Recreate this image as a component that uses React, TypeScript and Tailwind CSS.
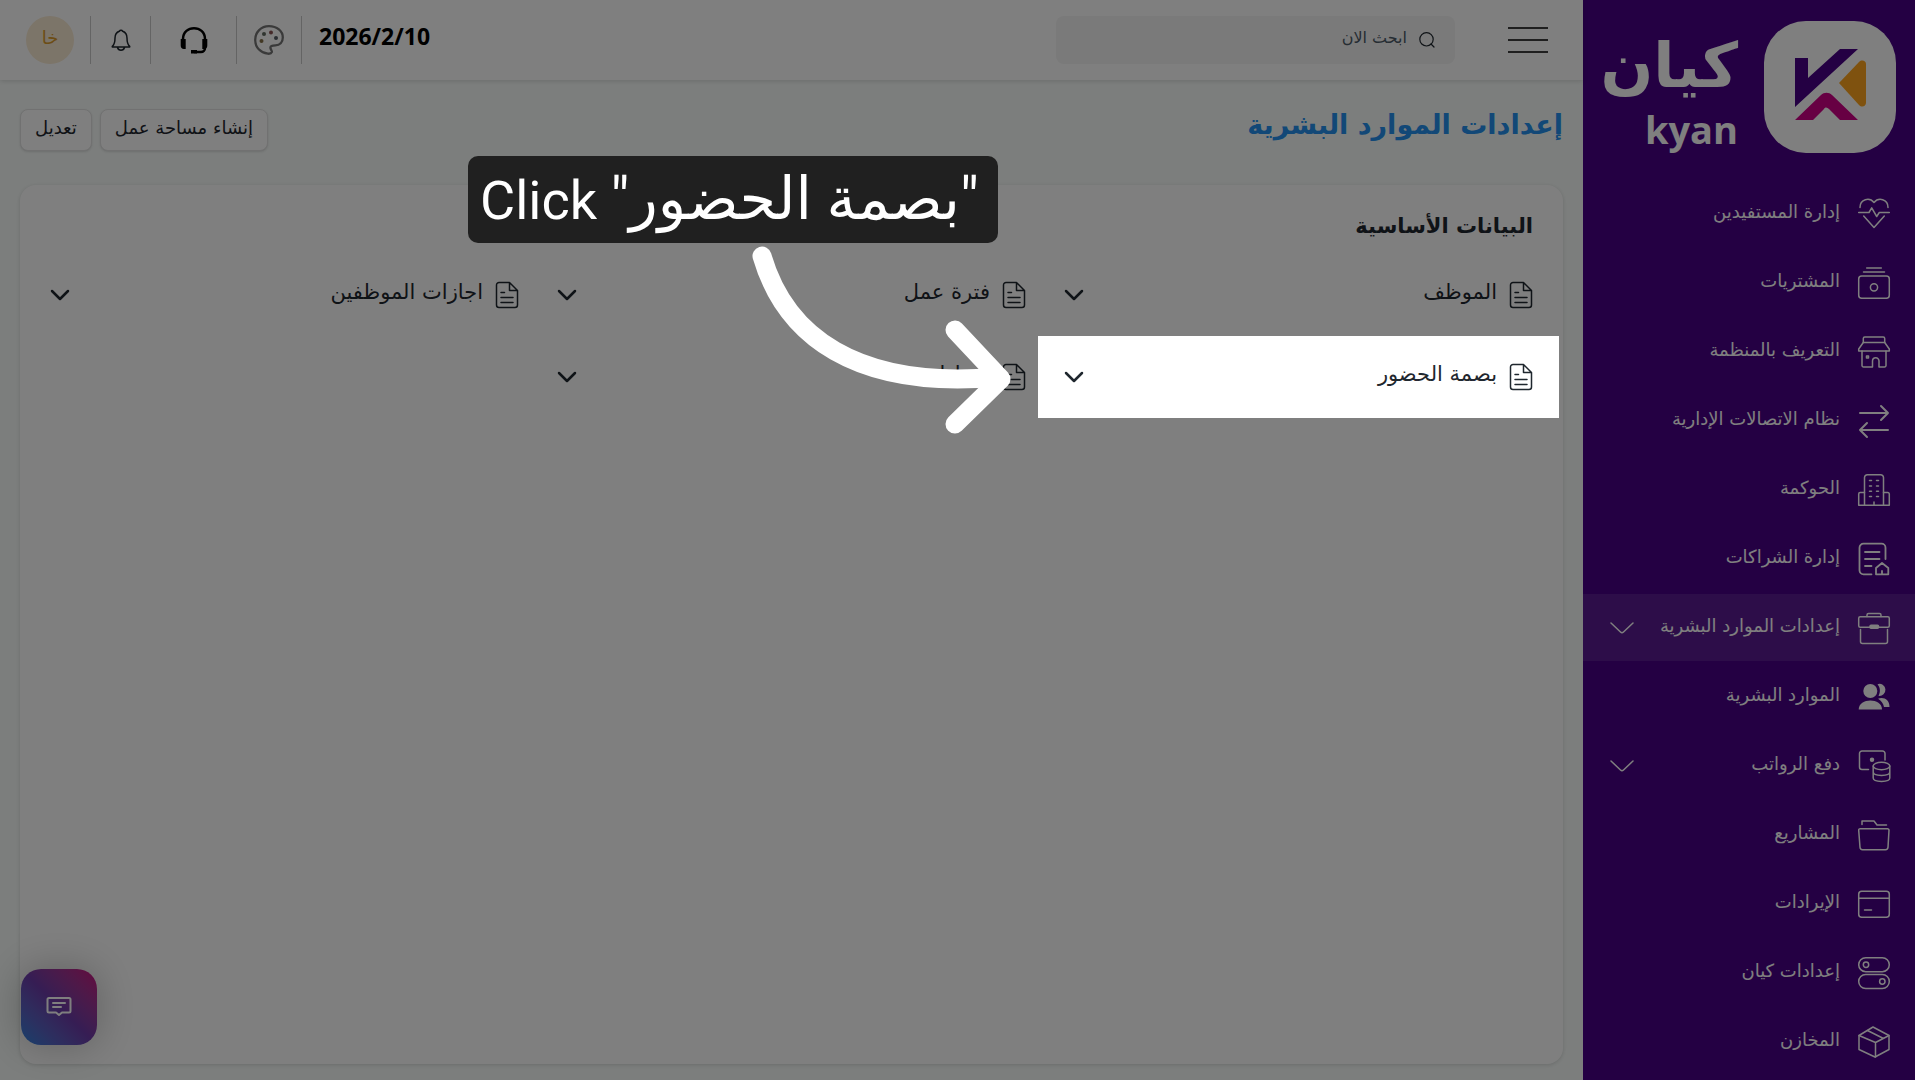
import type { ReactNode } from "react";

type IconProps = { className?: string };

const stroke = {
  fill: "none",
  stroke: "currentColor",
  strokeWidth: 1.5,
  strokeLinecap: "round",
  strokeLinejoin: "round",
} as const;

function MenuIcon({ children }: { children: ReactNode }) {
  return (
    <svg viewBox="0 0 32 32" className="h-8 w-8 shrink-0 overflow-visible" aria-hidden="true" {...stroke}>
      {children}
    </svg>
  );
}

type MenuItem = {
  label: string;
  icon: ReactNode;
  active?: boolean;
  expandable?: boolean;
};

const menu: MenuItem[] = [
  {
    label: "إدارة المستفيدين",
    icon: (
      <>
        <path d="M2 9.500C2 1 11.500-1 16 4.500c4.500-5.500 14-3.500 14 5" />
        <path d="M.7 14.500H11l2.700-4.600 5 8.600 2.600-4h10" />
        <path d="M5.700 18 16 29.500 26.300 18" />
      </>
    ),
  },
  {
    label: "المشتريات",
    icon: (
      <>
        <path d="M8.700 1h14.600M5.500 5h21" />
        <rect x="0.7" y="9" width="30.600" height="22.300" rx="3" />
        <circle cx="16" cy="20.300" r="3.600" />
      </>
    ),
  },
  {
    label: "التعريف بالمنظمة",
    icon: (
      <>
        <path d="M5.300 6.500V2.500A1.500 1.500 0 0 1 6.800 1h18.400a1.500 1.500 0 0 1 1.500 1.500v4" />
        <path d="M5.300 6.500h21.400l4.600 6.500v2H.7v-2z" />
        <path d="M4 15v14.500A1.500 1.500 0 0 0 5.500 31h9v-6a3 3 0 0 1 6.500 0v6h5.500a1.500 1.500 0 0 0 1.500-1.500V15" />
        <rect x="8.500" y="20" width="2" height="2" />
      </>
    ),
  },
  {
    label: "نظام الاتصالات الإدارية",
    icon: (
      <>
        <path strokeWidth="2" d="M2 8h28M23 1l7 7-7 7" />
        <path strokeWidth="2" d="M30 25H2M9 18l-7 7 7 7" />
      </>
    ),
  },
  {
    label: "الحوكمة",
    icon: (
      <>
        <path d="M6.500 31.300V3.500A3 3 0 0 1 9.500.7h13a3 3 0 0 1 3 2.800v27.800" />
        <path d="M6.500 18.500H2.200A1.500 1.500 0 0 0 .7 20v11.300h30.600V20a1.500 1.500 0 0 0-1.500-1.500h-4.300" />
        <path d="M11.500 6.500h2M18.500 6.500h2M11.500 12h2M18.500 12h2M11.500 17.200h2M18.500 17.200h2M11.500 22.500h2M18.500 22.500h2M16 28v3" />
      </>
    ),
  },
  {
    label: "إدارة الشراكات",
    icon: (
      <>
        <path strokeWidth="1.800" d="M13.500 31.300H5.500a4 4 0 0 1-4-4V4.700a4 4 0 0 1 4-4h18a4 4 0 0 1 4 4V16" />
        <path strokeWidth="1.800" d="M7 9h14.500M7 16h14.500M7 23h6.500" />
        <path strokeWidth="1.800" d="M18 31.300V25l6-5 6.300 5v6.300zM24 28v3" />
      </>
    ),
  },
  {
    label: "إعدادات الموارد البشرية",
    active: true,
    expandable: true,
    icon: (
      <>
        <path d="M9 4.500V3A1.500 1.500 0 0 1 10.500 1.500h11A1.500 1.500 0 0 1 23 3v1.500" />
        <rect x="0.700" y="4.700" width="30.600" height="10.600" rx="1.500" />
        <path d="M2.500 17.500v12a2 2 0 0 0 2 2h23a2 2 0 0 0 2-2v-12" />
        <rect x="12" y="13.300" width="8.500" height="3" rx="1" fill="currentColor" />
      </>
    ),
  },
  {
    label: "الموارد البشرية",
    icon: (
      <g fill="currentColor" stroke="none">
        <circle cx="12.300" cy="10" r="7" />
        <path d="M.7 28.500c0-12 23.300-12 23.300 0z" />
        <path d="M19.500 3.200a6 6 0 1 1 1 11.600c2-3.500 2-8-1-11.600z" />
        <path d="M20 17.700c6-2 11.500 1 11.500 8.300H26c-.5-3.500-3-6.500-6-8.300z" />
      </g>
    ),
  },
  {
    label: "دفع الرواتب",
    expandable: true,
    icon: (
      <>
        <path d="M10.500 19.500H4A2.500 2.500 0 0 1 1.500 17V3.500A2.500 2.500 0 0 1 4 1h20.500A2.500 2.500 0 0 1 27 3.500V10" />
        <circle cx="14" cy="9.700" r="1.500" fill="currentColor" />
        <ellipse cx="23.500" cy="16" rx="8.300" ry="3.700" />
        <path d="M15.200 16v12c0 4.500 16.600 4.500 16.600 0V16M15.200 22c0 4.500 16.600 4.500 16.600 0" />
      </>
    ),
  },
  {
    label: "المشاريع",
    icon: (
      <>
        <path d="M4 5.500V2h12l3 4h9.500" />
        <path d="M2.500 9.700h27a1.500 1.500 0 0 1 1.500 1.600l-1 17a2.500 2.500 0 0 1-2.500 2.400h-23A2.500 2.500 0 0 1 2 28.300l-1.300-17a1.500 1.500 0 0 1 1.800-1.600z" />
      </>
    ),
  },
  {
    label: "الإيرادات",
    icon: (
      <>
        <rect x="0.700" y="3.300" width="30.600" height="26" rx="3" />
        <path d="M.7 10.300h30.600M6.500 22h7" />
      </>
    ),
  },
  {
    label: "إعدادات كيان",
    icon: (
      <>
        <rect x="0.700" y="0.700" width="30.600" height="14" rx="7" />
        <circle cx="8" cy="7.700" r="2.700" />
        <rect x="0.700" y="17.500" width="30.600" height="14" rx="7" />
        <circle cx="24.300" cy="24.500" r="2.700" />
      </>
    ),
  },
  {
    label: "المخازن",
    icon: (
      <>
        <path d="M1 9.500 15 1l16 8.500v14L17 31 1 23.500z" />
        <path d="m1 9.500 16.500 7L31 9.500M17.500 16.500V31M9.500 4.500l16 8" />
      </>
    ),
  },
];

type Card = { label: string; highlighted?: boolean };

const cards: Card[] = [
  { label: "الموظف" },
  { label: "فترة عمل" },
  { label: "اجازات الموظفين" },
  { label: "بصمة الحضور", highlighted: true },
  { label: "إعدادات" },
];

export default function App() {
  return (
    <div
      dir="rtl"
      className="flex min-h-screen overflow-hidden bg-[#f9fdfb] font-['DejaVu_Sans',sans-serif] text-[#1f272e]"
    >
      <Sidebar />
      <div className="relative flex min-w-0 flex-1 flex-col">
        <TopBar />
        <main className="flex flex-1 flex-col px-5 pb-4">
          <div className="flex h-[105px] items-center justify-between pb-1.5">
            <h1 className="pb-2 text-[27px] font-bold text-[#2490ef]">إعدادات الموارد البشرية</h1>
            <div className="flex gap-2">
              <ActionButton>إنشاء مساحة عمل</ActionButton>
              <ActionButton>تعديل</ActionButton>
            </div>
          </div>
          <section className="flex-1 rounded-2xl bg-white px-[30px] pt-[25px] shadow-[0_1px_4px_rgba(0,0,0,0.15)]">
            <h2 className="text-[21px] leading-8 font-bold">البيانات الأساسية</h2>
            <div className="mt-3 grid grid-cols-3 gap-x-[38px]">
              {cards.map((c) => (
                <LinkCard key={c.label} {...c} />
              ))}
            </div>
          </section>
        </main>
        <button
          type="button"
          aria-label="محادثة"
          className="absolute bottom-[35px] left-[21px] flex h-[76px] w-[76px] items-center justify-center rounded-[20px] bg-linear-to-tr from-[#2080d8] via-[#6c3ba8] to-[#c8007c] text-white shadow-[0_0_40px_rgba(0,0,0,0.25)]"
        >
          <svg viewBox="0 0 26 22" className="h-[22px] w-[26px]" aria-hidden="true" {...stroke} strokeWidth={2}>
            <path d="M3 2h20a1.500 1.500 0 0 1 1.500 1.500V15a1.500 1.500 0 0 1-1.500 1.500h-7L13 19l-3-2.500H3A1.500 1.500 0 0 1 1.500 15V3.500A1.500 1.500 0 0 1 3 2z" />
            <path d="M7 7h12M7 11h8" />
          </svg>
        </button>
      </div>
    </div>
  );
}

function Sidebar() {
  return (
    <aside className="w-[332px] shrink-0 bg-[#480086] text-white">
      <div className="flex h-[180px] items-start gap-[26px] pt-[21px] pr-[19px]">
        <LogoMark />
        <div className="flex flex-col items-start font-bold">
          <span className="text-[62px] leading-[90px]">كيان</span>
          <span className="font-['Open_Sans',sans-serif] text-[38px] leading-9" dir="ltr">
            kyan
          </span>
        </div>
      </div>
      <nav>
        <ul className="flex flex-col gap-0.5">
          {menu.map((m) => (
            <li key={m.label}>
              <a
                href="#"
                className={`flex h-[67px] items-center gap-[18px] pr-[25px] pl-[27px] ${m.active ? "bg-white/10" : ""}`}
              >
                <MenuIcon>{m.icon}</MenuIcon>
                <span className="flex-1 pb-1 text-lg whitespace-nowrap">{m.label}</span>
                {m.expandable && (
                  <svg viewBox="0 0 24 12" className="h-3 w-6 shrink-0" aria-hidden="true" {...stroke}>
                    <path d="m1 1 9.500 9a2.200 2.200 0 0 0 3 0L23 1" />
                  </svg>
                )}
              </a>
            </li>
          ))}
        </ul>
      </nav>
    </aside>
  );
}

function LogoMark() {
  return (
    <svg viewBox="0 0 132 132" className="h-[132px] w-[132px] shrink-0" aria-hidden="true">
      <rect width="132" height="132" rx="42" fill="#fff" />
      <path d="M31 37h13v20l32-29h18L31 86z" fill="#480086" />
      <path d="M75 62 95 41c3-3 7-1 7 2v39c0 3-4 5-7 2z" fill="#ffa51f" />
      <path d="M31 99l26-25c3-3 8-3 11 0l26 25H76L65 88c-2-2-4-2-5 0L49 99z" fill="#cf0087" />
    </svg>
  );
}

function TopBar() {
  return (
    <header className="flex h-20 items-center justify-between bg-white pr-[35px] pl-[26px] shadow-[0_1px_5px_rgba(0,0,0,0.15)]">
      <div className="flex items-center gap-[53px]">
        <button type="button" aria-label="القائمة">
          <svg viewBox="0 0 40 28" className="h-7 w-10" aria-hidden="true">
            <path d="M0 2h40M0 14h40M0 26h40" stroke="#000" strokeWidth="1.500" />
          </svg>
        </button>
        <label className="flex h-12 w-[399px] items-center gap-3 rounded-lg bg-[#f4f4f4] px-5">
          <svg viewBox="0 0 16 16" className="h-4 w-4 shrink-0" aria-hidden="true" {...stroke} strokeWidth={1.2}>
            <circle cx="7.500" cy="7.300" r="6.700" />
            <path d="m12 12 3 3" />
          </svg>
          <input
            type="text"
            aria-label="ابحث الان"
            placeholder="ابحث الان"
            className="min-w-0 flex-1 bg-transparent pb-1 text-base outline-none placeholder:text-[#4c5a67]"
          />
        </label>
      </div>
      <div className="flex items-center">
        <time className="pb-2 pl-[17px] font-['Open_Sans',sans-serif] text-[23px] font-bold text-black" dir="ltr">
          2026/2/10
        </time>
        <Divider />
        <button type="button" aria-label="المظهر" className="flex w-16 justify-center">
          <PaletteIcon className="h-[30px] w-[30px] text-[#757575]" />
        </button>
        <Divider />
        <button type="button" aria-label="الدعم" className="flex w-[85px] justify-center text-black">
          <svg viewBox="0 0 28 28" className="h-7 w-7" aria-hidden="true">
            <path d="M3 14v-1C3 -1.500 25 -1.500 25 13v1M25 20v2a4 4 0 0 1-4 4h-7" fill="none" stroke="currentColor" strokeWidth="2.500" />
            <path d="M.7 13h5v10H4a3.500 3.500 0 0 1-3.300-3.500zM22.300 13h5v6.500A3.500 3.500 0 0 1 24 23h-1.700zM11 24h6v3.500h-6z" />
          </svg>
        </button>
        <Divider />
        <button type="button" aria-label="الإشعارات" className="flex w-[59px] justify-center">
          <svg viewBox="0 0 20 22" className="h-[22px] w-5" aria-hidden="true" {...stroke}>
            <path d="M8.300 2.300a2 2 0 0 1 3.400 0C15 3.500 16 6 16 9c0 4.500.5 6.500 2.700 8.300v.7H1.300v-.7C3.500 15.500 4 13.500 4 9c0-3 1-5.500 4.300-6.700zM6.500 18.500c1 3.500 6 3.500 7 0" />
          </svg>
        </button>
        <Divider />
        <span className="mr-4 flex h-12 w-12 items-center justify-center rounded-full bg-[#f9ead2] pb-1 text-lg text-[#d99a2b]">
          خا
        </span>
      </div>
    </header>
  );
}

function Divider() {
  return <span className="h-12 w-px bg-[#c8c8c8]" />;
}

function PaletteIcon({ className = "" }: IconProps) {
  return (
    <svg viewBox="0 0 30 30" className={className} aria-hidden="true">
      <path
        d="M15 1.200c8 0 13.800 5 13.800 11.300 0 5-3 7.800-7.300 7.800-3.500 0-5.500.7-5 3 .3 1.700 1.800 2.300 1.300 3.900-.6 1.700-2 1.700-4 1.500C6.500 27.700 1.200 22.500 1.200 15 1.200 7 7 1.200 15 1.200z"
        fill="none"
        stroke="currentColor"
        strokeWidth="2.300"
      />
      <circle cx="10" cy="9" r="2" fill="#606a60" />
      <circle cx="17" cy="7.500" r="2" fill="#8a5555" />
      <circle cx="22" cy="13" r="2" fill="#555c66" />
      <circle cx="7.500" cy="16" r="2" fill="#847048" />
    </svg>
  );
}

function ActionButton({ children }: { children: ReactNode }) {
  return (
    <button
      type="button"
      className="h-[42px] rounded-lg border border-[#e2e2e2] bg-white px-3.5 pb-1 text-lg leading-6 shadow-sm"
    >
      {children}
    </button>
  );
}

function LinkCard({ label, highlighted }: Card) {
  return (
    <div
      className={`relative -mx-[26px] flex h-[82px] items-center px-[26px] ${
        highlighted ? "z-20 shadow-[0_0_0_9999px_rgba(0,0,0,0.5)]" : ""
      }`}
    >
      <button type="button" className="flex flex-1 items-center gap-3">
        <svg viewBox="0 0 24 28" className="h-7 w-6 shrink-0" aria-hidden="true" {...stroke}>
          <path d="M4 1.500h10.500L22.500 9.500V24a2.500 2.500 0 0 1-2.500 2.500H4A2.500 2.500 0 0 1 1.500 24V4A2.500 2.500 0 0 1 4 1.500zM14.500 1.500v8h8" />
          <path d="M6 11.500h3.500M6 16.500h12M6 21.500h12" />
        </svg>
        <span className="pb-1.5 text-[21px] leading-7">{label}</span>
      </button>
      <svg viewBox="0 0 20 12" className="h-3 w-5 shrink-0" aria-hidden="true" {...stroke} strokeWidth={2.500}>
        <path d="m2 2 8 8 8-8" />
      </svg>
      {highlighted && <Hint label={label} />}
    </div>
  );
}

function Hint({ label }: { label: string }) {
  return (
    <>
      <div
        dir="ltr"
        className="absolute -top-[180px] right-[561px] flex h-[87px] w-[530px] items-center rounded-[10px] bg-[#202020] pl-3 font-['Roboto','DejaVu_Sans',sans-serif] text-[54px] whitespace-nowrap text-white"
      >
        <span>
          Click{" "}
          <span className="text-[59px]">
            "<bdi>{label}</bdi>"
          </span>
        </span>
      </div>
      <svg
        viewBox="740 240 280 200"
        className="absolute -top-24 right-[539px] h-[200px] w-[280px]"
        fill="none"
        stroke="#fff"
        strokeWidth="19"
        strokeLinecap="round"
        strokeLinejoin="round"
        aria-hidden="true"
      >
        <path d="M762 256C785 335 855 390 998 377" />
        <path d="m955 330 46 49-46 45" />
      </svg>
    </>
  );
}
